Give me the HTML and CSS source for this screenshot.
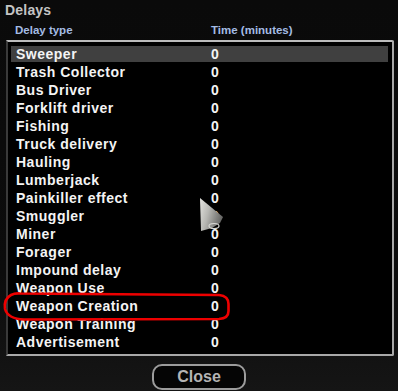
FILE: index.html
```html
<!DOCTYPE html>
<html lang="en">
<head>
  <meta charset="UTF-8">
  <title>Delays</title>
  <link rel="stylesheet" href="styles.css">
</head>
<body>

  <div class="window">
    <div class="title">Delays</div>

    <div class="cols">
      <div class="col-name">Delay type</div>
      <div class="col-time">Time (minutes)</div>
    </div>

    <div class="list">
      <div class="row selected"><span class="name">Sweeper</span><span class="time">0</span></div>
      <div class="row"><span class="name">Trash Collector</span><span class="time">0</span></div>
      <div class="row"><span class="name">Bus Driver</span><span class="time">0</span></div>
      <div class="row"><span class="name">Forklift driver</span><span class="time">0</span></div>
      <div class="row"><span class="name">Fishing</span><span class="time">0</span></div>
      <div class="row"><span class="name">Truck delivery</span><span class="time">0</span></div>
      <div class="row"><span class="name">Hauling</span><span class="time">0</span></div>
      <div class="row"><span class="name">Lumberjack</span><span class="time">0</span></div>
      <div class="row"><span class="name">Painkiller effect</span><span class="time">0</span></div>
      <div class="row"><span class="name">Smuggler</span><span class="time">0</span></div>
      <div class="row"><span class="name">Miner</span><span class="time">0</span></div>
      <div class="row"><span class="name">Forager</span><span class="time">0</span></div>
      <div class="row"><span class="name">Impound delay</span><span class="time">0</span></div>
      <div class="row"><span class="name">Weapon Use</span><span class="time">0</span></div>
      <div class="row"><span class="name">Weapon Creation</span><span class="time">0</span></div>
      <div class="row"><span class="name">Weapon Training</span><span class="time">0</span></div>
      <div class="row"><span class="name">Advertisement</span><span class="time">0</span></div>
    </div>

    <div class="footer">
      <button class="close-btn">Close</button>
    </div>
  </div>

  <!-- annotation + mouse pointer drawn over the window -->
  <svg class="overlay" width="398" height="391" viewBox="0 0 398 391">
    <defs>
      <linearGradient id="cone" x1="0" y1="0" x2="1" y2="0.4">
        <stop offset="0" stop-color="#e4e4e0"/>
        <stop offset="0.45" stop-color="#b8b8b4"/>
        <stop offset="1" stop-color="#6a6a68"/>
      </linearGradient>
    </defs>
    <path class="mark" d="M 20 293.5 L 219 295 Q 228.5 296 228.5 304 L 228.5 311 Q 228.5 318.5 219 319 L 24 319.5 Q 8 319 5 309 Q 3.5 299 11 295 Q 15 293 20 293.5 Z"/>
    <polygon points="200,198 223,217 220,223 212,228 201,231" fill="url(#cone)"/>
    <ellipse cx="214" cy="226" rx="5" ry="2.5" fill="none" stroke="#d8d8d4" stroke-width="1.2"/>
  </svg>

</body>
</html>
```

FILE: styles.css
```css
* { margin: 0; padding: 0; box-sizing: border-box; }

body {
  width: 398px;
  height: 391px;
  overflow: hidden;
  position: relative;
  background: linear-gradient(180deg, #0a0a0a 0%, #0c0c0c 70%, #151515 100%);
  font-family: 'Liberation Sans', Arial, sans-serif;
  font-weight: bold;
}

.title {
  height: 18px;
  padding: 2px 0 0 5px;
  font-size: 14px;
  line-height: 16px;
  color: #c4c4c4;
  letter-spacing: 0.2px;
}

.cols {
  display: flex;
  margin-top: 6px;
  padding-left: 15px;
  height: 13px;
  font-size: 11.5px;
  line-height: 13px;
  color: #a4bce4;
}

.col-name {
  width: 196px;
}

.list {
  margin: 3px 0 0 6px;
  width: 388px;
  padding: 4px 2px 2px 1px;
  background: #000;
  border: 2px solid #a8a8a8;
  border-top-color: #bcbcbc;
  border-left-color: #3a3a3a;
  border-radius: 0 2px 2px 0;
}

.row {
  display: flex;
  height: 16px;
  margin: 0 2px 2px 2px;
  padding-left: 5px;
  font-size: 14px;
  line-height: 16px;
  letter-spacing: 0.5px;
  color: #f4f4f4;
  white-space: nowrap;
}

.row.selected {
  background: #404040;
}

.name {
  width: 195px;
}

.footer {
  display: flex;
  justify-content: center;
  margin-top: 8px;
}

.close-btn {
  width: 94px;
  height: 26px;
  background: #050505;
  border: 2px solid #9c9c9c;
  border-radius: 10px;
  font-family: 'Liberation Sans', Arial, sans-serif;
  font-weight: bold;
  font-size: 16px;
  color: #b4b4b4;
}

.overlay {
  position: absolute;
  top: 0;
  left: 0;
  pointer-events: none;
}

.mark {
  fill: none;
  stroke: #ee0000;
  stroke-width: 2.6;
}
```
